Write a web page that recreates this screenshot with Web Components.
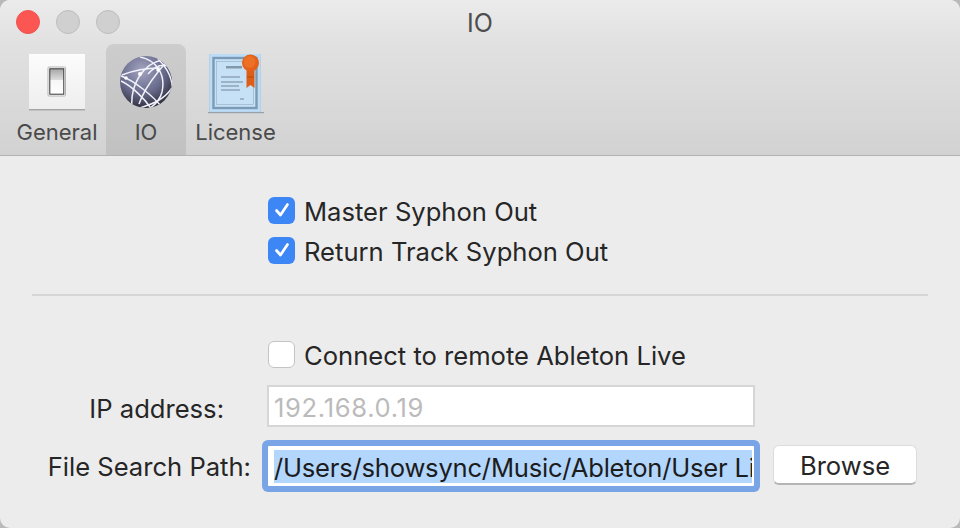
<!DOCTYPE html>
<html><head><meta charset="utf-8"><style>
html,body{margin:0;padding:0;background:#b9b9b9;width:960px;height:528px;overflow:hidden}
body{font-family:Inter,"Liberation Sans",sans-serif}
</style></head><body>
<prefs-window>
<win-titlebar title-text="IO"></win-titlebar>
<win-toolbar>
<tool-tab label="General"><svg width="56" height="58" viewBox="0 0 56 58"><defs><linearGradient id="pl" x1="0" y1="0" x2="0" y2="1"><stop offset="0" stop-color="#fcfcfc"/><stop offset="1" stop-color="#eeeeee"/></linearGradient><linearGradient id="sw" x1="0" y1="0" x2="0" y2="1"><stop offset="0" stop-color="#a6a6a6"/><stop offset=".45" stop-color="#dedede"/><stop offset=".46" stop-color="#f6f6f6"/><stop offset="1" stop-color="#fff"/></linearGradient></defs><rect x="0" y="0" width="56" height="55.5" fill="url(#pl)"/><rect y="55" width="56" height="1.4" fill="#a4a4a4"/><rect x="19" y="13" width="17.500" height="29" rx="1" fill="#fff" stroke="#b4b4b4"/><rect x="20.800" y="14.800" width="14" height="25.400" fill="url(#sw)" stroke="#333" stroke-width="1"/></svg></tool-tab>
<tool-tab label="IO" selected><svg width="56" height="58" viewBox="0 0 56 58"><defs><radialGradient id="gl" cx=".42" cy=".28" r=".8"><stop offset="0" stop-color="#a2a4c0"/><stop offset=".55" stop-color="#67698a"/><stop offset="1" stop-color="#22222a"/></radialGradient><clipPath id="gc"><circle cx="28" cy="28" r="26"/></clipPath></defs><circle cx="28" cy="28" r="26" fill="url(#gl)"/><g clip-path="url(#gc)" fill="none" stroke="#f0f1fa" stroke-width="1.500"><path d="M3 22C15 26 36 42 46 56"/><path d="M3 27C14 32 28 46 34 56"/><path d="M14 54C12 32 24 10 44 6"/><path d="M40 5C46 10 54 22 54 32"/><path d="M22 3C38 6 48 20 44 38C42 46 38 50 32 54"/><path d="M30 20C37 12 44 10 50 12"/><path d="M21 50C25 38 32 28 40 18C44 13 47 10 48 8"/><path d="M22 54C34 50 46 46 54 34"/><path d="M4 21C14 17 28 14 42 14"/></g><circle cx="22" cy="20" r="2" fill="#fff"/><circle cx="40" cy="16" r="1.800" fill="#fff"/><circle cx="8" cy="24" r="1.800" fill="#fff"/></svg></tool-tab>
<tool-tab label="License"><svg width="56" height="62" viewBox="0 1 56 62"><rect x="1.500" y="0" width="51" height="59" fill="#bcdcf6" stroke="#a8c8e0" stroke-width=".6"/><rect x="5.500" y="5" width="43" height="50" fill="#c8e0f5" stroke="#7b9ab6" stroke-width="2.400"/><rect x="8.500" y="8.500" width="37" height="43" fill="#c6e0f6" stroke="#8fadc6" stroke-width=".6"/><rect x="18" y="13" width="16" height="2.500" fill="#8498ac"/><path d="M13 24h19M13 29h22M13 33h18M13 37h19M32 46h4" stroke="#728699" stroke-width="1" fill="none"/><rect y="59" x="-1.500" width="58" height="1.200" fill="#98a0a8"/><path d="M38.500 17h8v18l-4-3-4 3z" fill="#dd5e18"/><path d="M39 24h7" stroke="#b34a10" stroke-width="1"/><circle cx="42.500" cy="10" r="8.500" fill="#e5611a"/><circle cx="41.500" cy="9" r="6" fill="#ec7026"/></svg></tool-tab>
</win-toolbar>
<win-content>
<check-row checked>Master Syphon Out</check-row>
<check-row checked style="margin-top:14px">Return Track Syphon Out</check-row>
<h-sep></h-sep>
<check-row>Connect to remote Ableton Live</check-row>
<form-row label="IP address:" label-pad="27" style="margin-top:18px"><text-field placeholder-look>192.168.0.19</text-field></form-row>
<form-row label="File Search Path:" label-pad="0" style="margin-top:19px"><text-field focused><span>/Users/showsync/Music/Ableton/User Li</span></text-field><push-button>Browse</push-button></form-row>
</win-content>
</prefs-window>
<script>
function def(name,html,extra){
  customElements.define(name,class extends HTMLElement{
    constructor(){super();this.attachShadow({mode:'open'}).innerHTML=html(this);}
    connectedCallback(){extra&&extra(this);}
  });
}
def('prefs-window',()=>`<style>:host{display:flex;flex-direction:column;width:960px;height:528px;background:#ececec;border-radius:10px;overflow:hidden}</style><slot></slot>`);
def('win-titlebar',h=>`<style>:host{display:flex;align-items:center;position:relative;height:44px;padding-left:16px;gap:16px;background:linear-gradient(#ebebeb,#e1e1e1);flex:none}
.l{width:24px;height:24px;border-radius:50%;box-sizing:border-box;background:#d0d0d0;border:1px solid #bdbdbd}.r{background:#fc5652;border-color:#f0524e}
.t{position:absolute;left:0;right:0;top:0;line-height:47px;text-align:center;font-size:25px;color:#4e4e4e}</style>
<span class="l r"></span><span class="l"></span><span class="l"></span><span class="t">${h.getAttribute('title-text')}</span>`);
def('win-toolbar',()=>`<style>:host{display:flex;flex:none;height:112px;box-sizing:border-box;padding-left:8px;background:linear-gradient(#e1e1e1,#d2d2d2);border-bottom:1px solid #b2b2b2}</style><slot></slot>`);
def('tool-tab',h=>{const s=h.hasAttribute('selected');const w={General:98,IO:80,License:99}[h.getAttribute('label')];
return `<style>:host{display:flex;flex-direction:column;align-items:center;width:${w}px;height:111px;box-sizing:border-box;padding-top:10px;position:relative;${s?'background:linear-gradient(#cdcdcd,#c1c1c1);border-radius:8px 8px 0 0;':''}}
.i{height:58px;display:flex;justify-content:center}.t{position:absolute;top:74px;left:0;right:0;text-align:center;font-size:22px;line-height:28px;color:#4a4a4a}</style>
<div class="i"><slot></slot></div><div class="t">${h.getAttribute('label')}</div>`});
def('win-content',()=>`<style>:host{display:flex;flex-direction:column;flex:1;padding:41px 32px 0;color:#262626}</style><slot></slot>`);
def('check-row',h=>`<style>:host{display:flex;align-items:center;height:26px;padding-left:236px;font-size:25.600px;color:#262626}
.b{width:27px;height:27px;box-sizing:border-box;border-radius:6px;margin-right:9px;flex:none;display:flex;align-items:center;justify-content:center;background:${h.hasAttribute('checked')?'#3d86f6':'#fff;border:1px solid #c4c4c4'}}
.x{padding-top:2px}</style>
<span class="b">${h.hasAttribute('checked')?'<svg width="18" height="18" viewBox="0 0 18 18"><path d="M3.500 9.500L7.500 14L14.500 3.500" fill="none" stroke="#fff" stroke-width="2.700" stroke-linecap="round" stroke-linejoin="round"/></svg>':''}</span><span class="x"><slot></slot></span>`);
def('h-sep',()=>`<style>:host{display:block;height:2px;background:#d6d6d6;margin:31px 0 45px}</style>`);
def('form-row',h=>{const ip=+h.getAttribute('label-pad')>0;return `<style>:host{display:flex;align-items:center;font-size:25.600px}
.l{width:219px;flex:none;box-sizing:border-box;text-align:right;padding:${ip?4:0}px ${h.getAttribute('label-pad')}px 0 0;color:#262626;white-space:nowrap}
.f{display:flex;align-items:center;margin-left:${ip?16:17}px}</style><span class="l">${h.getAttribute('label')}</span><span class="f"><slot></slot></span>`});
def('text-field',h=>{const f=h.hasAttribute('focused');
return `<style>:host{display:block;box-sizing:border-box;width:${f?486:488}px;height:${f?40:42}px;background:#fff;border:${f?'0':'2px solid #d6d6d6'};font-size:25.600px;letter-spacing:${f?-.22:.65}px;line-height:42px;white-space:nowrap;overflow:hidden;padding:0 ${f?0:5}px;color:${f?'#1c1c1c':'#bbb'};${f?'box-shadow:0 0 0 6px #79a4e6;border-radius:1px;':''}}
:host([focused]){overflow:visible;clip-path:inset(-6px round 6px)}
.w{${f?'margin:4px 2px 0 6px;height:33px;line-height:36px;background:#b3d6fd;overflow:hidden;':''}}</style><div class="w"><slot></slot></div>`});
def('push-button',()=>`<style>:host{display:flex;align-items:center;justify-content:center;box-sizing:border-box;width:144px;height:40px;margin:-3px 0 0 19px;padding-top:2px;background:#fff;border-radius:6px;border:1px solid #dcdcdc;border-bottom:2px solid #b5b5b5;font-size:25.600px;color:#262626}</style><slot></slot>`);
</script>
</body></html>
